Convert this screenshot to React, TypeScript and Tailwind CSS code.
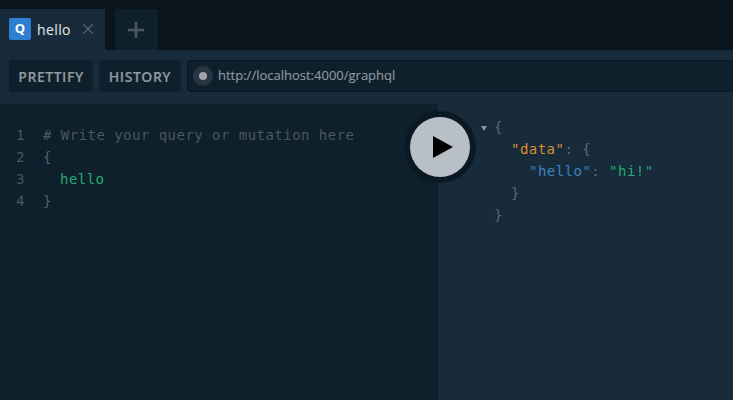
import React from 'react';

const mono = "font-['DejaVu_Sans_Mono',monospace]";

const queryLines = [
  { n: 1, text: <span className="text-[#ffffff]/25"># Write your query or mutation here</span> },
  { n: 2, text: <span className="text-[#ffffff]/30">{'{'}</span> },
  { n: 3, text: <span className="pl-[17px] text-[#27a872]">hello</span> },
  { n: 4, text: <span className="text-[#ffffff]/30">{'}'}</span> },
];

const App: React.FC = () => {
  return (
    <div className="relative flex h-[400px] w-[733px] flex-col overflow-hidden bg-[#09141c] font-['Open_Sans',sans-serif]">
      <div className="flex h-[50px] items-end bg-[#09141c]">
        <div className="flex h-[41px] w-[105px] items-center bg-[#172b3a] pb-[1px] pl-[9px]">
          <div className="flex h-[22px] w-[22px] items-center justify-center rounded-[2px] bg-[#2e7fd1] text-[13px] font-bold text-white">Q</div>
          <span className="ml-[6px] text-[14px] tracking-[0.4px] text-white/90">hello</span>
          <svg className="ml-[12px]" width="10" height="10" viewBox="0 0 10 10">
            <path d="M0.5 0.5l9 9M9.5 0.5l-9 9" stroke="#ffffff" strokeOpacity="0.25" strokeWidth="1.5" fill="none" />
          </svg>
        </div>
        <div className="ml-[10px] flex h-[41px] w-[43px] items-center justify-center bg-[#0f202d] pr-[1px]">
          <svg width="16" height="16" viewBox="0 0 16 16">
            <path d="M8 0v16M0 8h16" stroke="#ffffff" strokeOpacity="0.25" strokeWidth="2.5" fill="none" />
          </svg>
        </div>
      </div>

      <div className="flex h-[54px] items-center gap-[6px] bg-[#172b3a] pb-[2px] pl-[9px]">
        <button className="h-[32px] w-[84px] shrink-0 rounded-[2px] bg-[#0f202d] text-center text-[14px] font-semibold tracking-[0.53px] text-white/55">PRETTIFY</button>
        <button className="h-[32px] w-[82px] shrink-0 rounded-[2px] bg-[#0f202d] text-center text-[14px] font-semibold tracking-[0.53px] text-white/55">HISTORY</button>
        <div className="flex h-[32px] w-[560px] shrink-0 items-center rounded-[4px] border border-[#09141c] bg-[#0f202d] pl-[5px]">
          <div className="flex h-[20px] w-[20px] items-center justify-center rounded-full bg-white/10">
            <div className="h-[8px] w-[8px] rounded-full bg-white/55" />
          </div>
          <span className="ml-[5px] text-[13px] text-white/55">http://localhost:4000/graphql</span>
        </div>
      </div>

      <div className="flex flex-1">
        <div className={`w-[438px] bg-[#0f202d] pt-[20px] text-[14px] leading-[22px] tracking-[0.47px] ${mono}`}>
          {queryLines.map(line => (
            <div key={line.n} className="flex">
              <span className="w-[43px] pl-[16px] text-white/25">{line.n}</span>
              {line.text}
            </div>
          ))}
        </div>
        <div className={`relative flex-1 bg-[#172b3a] pt-[12px] text-[14px] leading-[22px] tracking-[0.47px] ${mono}`}>
          <svg className="absolute left-[43px] top-[22px]" width="6" height="5" viewBox="0 0 6 5">
            <path d="M0 0h6L3 5z" fill="#ffffff" fillOpacity="0.5" />
          </svg>
          <div className="pl-[56px] text-white/30">{'{'}</div>
          <div className="pl-[73px] text-white/30"><span className="text-[#d98f2e]">"data"</span>: {'{'}</div>
          <div className="pl-[91px] text-white/30"><span className="text-[#3a83bf]">"hello"</span>: <span className="text-[#27a872]">"hi!"</span></div>
          <div className="pl-[73px] text-white/30">{'}'}</div>
          <div className="pl-[56px] text-white/30">{'}'}</div>
        </div>
      </div>

      <div className="absolute left-[404px] top-[111px] flex h-[72px] w-[72px] items-center justify-center rounded-full bg-[#0b1924]">
        <div className="flex h-[60px] w-[60px] items-center justify-center rounded-full bg-[#b9bfc7]">
          <svg className="ml-[6px]" width="20" height="22" viewBox="0 0 20 22">
            <path d="M0 0l20 11L0 22z" fill="#000000" />
          </svg>
        </div>
      </div>
    </div>
  );
};

export default App;
